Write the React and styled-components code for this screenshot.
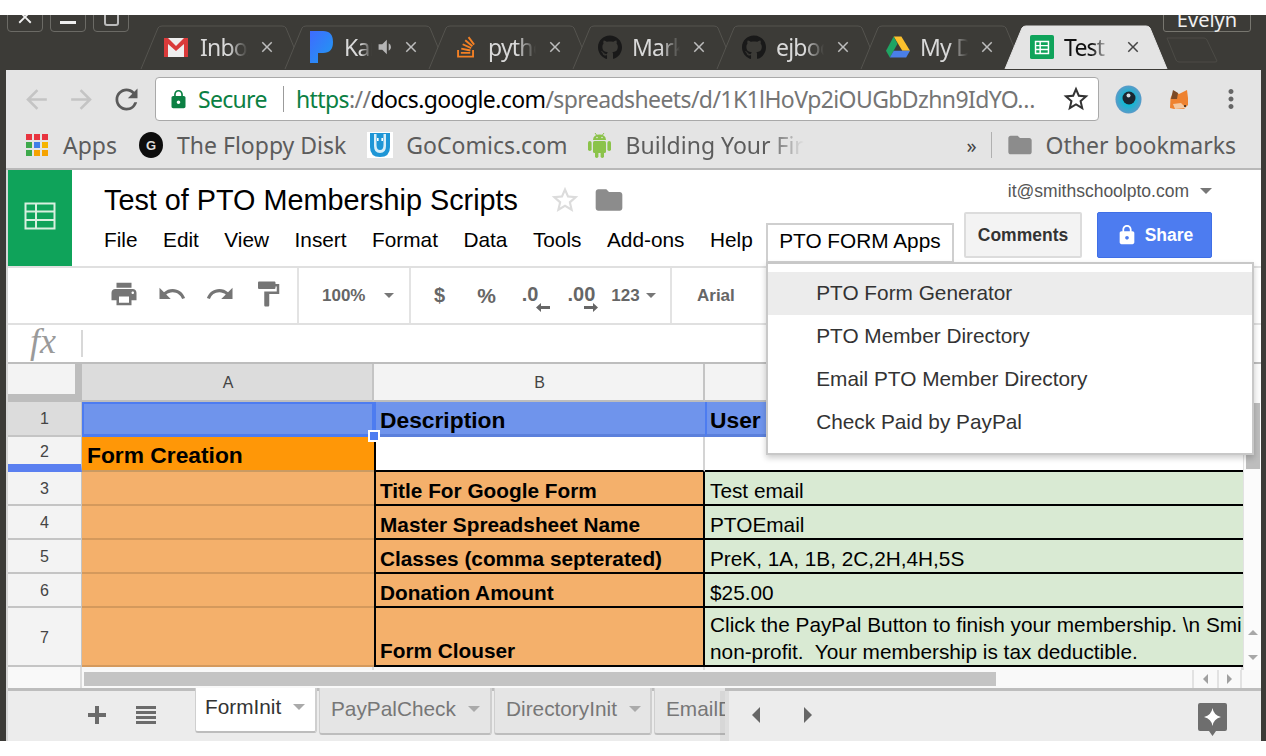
import styled, { createGlobalStyle } from 'styled-components';
import {
  MdArrowBack, MdArrowForward, MdClose, MdFolder, MdFormatPaint, MdLock, MdMoreVert,
  MdPrint, MdRedo, MdRefresh, MdStarBorder, MdUndo, MdVolumeDown,
} from 'react-icons/md';
import { FaGithub, FaStackOverflow } from 'react-icons/fa';

const uiFont = '"Noto Sans", "Open Sans", sans-serif';
const docFont = '"Liberation Sans", Arial, sans-serif';
const barColor = '#3c3b37';
const chromeGray = '#e4e4e4';
const orange = '#f4b06b';
const green = '#d9ead3';
const headBlue = '#6f94ec';
const selBlue = '#4d7cf0';

const GlobalStyle = createGlobalStyle`
  html, body {
    margin: 0;
    background: #fff;
    overflow: hidden;
  }
  * { box-sizing: border-box; }
`;

const Page = styled.div`
  width: 1266px;
  height: 756px;
  padding-top: 15px;
  background: #fff;
`;

const Window = styled.div`
  position: relative;
  height: 726px;
  padding: 0 5px 0 6px;
  background: ${barColor};
  display: flex;
  flex-direction: column;
  overflow: hidden;
`;

/* title strip */
const TitleStrip = styled.div`
  height: 55px;
  flex: none;
  display: flex;
  align-items: flex-start;
  padding-left: 1px;
`;

const WinButton = styled.div`
  width: 36px;
  height: 30px;
  margin: -13px 7px 0 0;
  border: 1px solid #6b6a65;
  border-radius: 4px;
  color: #f2f2f2;
  display: flex;
  align-items: flex-end;
  justify-content: center;
  padding-bottom: 6px;
`;

const MinBar = styled.div`
  width: 16px;
  height: 3px;
  margin-bottom: 1px;
  background: #eee;
`;

const RestoreBox = styled.div`
  width: 15px;
  height: 16px;
  border: 2px solid #bbb;
  border-radius: 3px;
  margin-bottom: -1px;
`;

const TabRow = styled.div`
  display: flex;
  margin: 10px 0 0 4px;
`;

const Tab = styled.div`
  position: relative;
  width: 164px;
  height: 44px;
  margin-right: -20px;
  padding-left: 26px;
  display: flex;
  align-items: center;
  z-index: ${(p) => (p.$active ? 2 : 1)};
  color: ${(p) => (p.$active ? '#111' : '#d9d9d9')};
`;

const TabOutline = styled.svg`
  position: absolute;
  inset: 0;
  width: 100%;
  height: 100%;
  z-index: -1;
`;

const Favicon = styled.div`
  width: 24px;
  height: 24px;
  flex: none;
  margin-left: ${(p) => p.$nudge || 0}px;
  margin-right: ${(p) => -(p.$nudge || 0)}px;
  display: flex;
  align-items: center;
  justify-content: center;
`;

const TabTitle = styled.div`
  width: ${(p) => p.$width}px;
  margin-left: 10px;
  flex: none;
  font: 23px ${uiFont};
  letter-spacing: -0.8px;
  white-space: nowrap;
  overflow: hidden;
  -webkit-mask-image: linear-gradient(to right, #000 60%, transparent 100%);
  mask-image: linear-gradient(to right, #000 60%, transparent 100%);
`;

const TabClose = styled(MdClose)`
  position: absolute;
  left: ${(p) => (p.$active ? 120 : 118)}px;
  top: 13px;
  color: ${(p) => (p.$active ? '#444' : '#bdbdbd')};
`;

const TabSpeaker = styled(MdVolumeDown)`
  margin-left: 2px;
  color: #b5b5b5;
  flex: none;
`;

const NewTabShape = styled.svg`
  margin: 12px 0 0 18px;
  flex: none;
`;

const ProfileClip = styled.div`
  position: absolute;
  left: 0;
  top: 0;
  width: 100%;
  height: 25px;
  overflow: hidden;
  pointer-events: none;
`;

const Profile = styled.div`
  position: absolute;
  left: 1163px;
  bottom: 8px;
  width: 88px;
  height: 27px;
  border: 1px solid #77766f;
  border-radius: 3px;
  color: #f0f0f0;
  font: 20px ${uiFont};
  text-align: center;
  line-height: 28px;
`;

/* url toolbar */
const UrlBar = styled.div`
  height: 55px;
  flex: none;
  display: flex;
  align-items: center;
  padding: 3px 0 0 8px;
  background: ${chromeGray};
`;

const NavButton = styled.div`
  width: 45px;
  display: flex;
  justify-content: center;
  color: ${(p) => (p.$off ? '#c4c4c4' : '#5a5a5a')};
`;

const Omnibox = styled.div`
  width: 944px;
  height: 44px;
  flex: none;
  margin-left: 6px;
  padding: 0 0 0 12px;
  display: flex;
  align-items: center;
  background: #fff;
  border: 1px solid #a9a9a9;
  border-radius: 4px;
  font: 23px ${uiFont};
  white-space: nowrap;
`;

const SecureLabel = styled.span`
  width: 69px;
  flex: none;
  margin-left: 9px;
  color: #0b8043;
  letter-spacing: -0.7px;
`;

const OmniDivider = styled.div`
  width: 1px;
  height: 26px;
  flex: none;
  margin: 0 12px 0 16px;
  background: #9b9b9b;
`;

const UrlText = styled.div`
  width: 742px;
  flex: none;
  overflow: hidden;
  letter-spacing: -0.6px;
  color: #757575;
`;

const UrlScheme = styled.span`
  color: #0b8043;
`;

const UrlHost = styled.span`
  color: #000;
`;

const OmniStar = styled(MdStarBorder)`
  margin-left: 23px;
  color: #333;
  flex: none;
`;

const ExtIcons = styled.div`
  display: flex;
  align-items: center;
  margin-left: 15px;
`;

const ExtSlot = styled.div`
  width: ${(p) => p.$w}px;
  flex: none;
  display: flex;
  justify-content: center;
  color: #666;
`;

/* bookmarks */
const BookmarkBar = styled.div`
  height: 45px;
  flex: none;
  display: flex;
  align-items: center;
  padding: 0 0 3px 20px;
  background: ${chromeGray};
  border-bottom: 2px solid #b8b8b8;
  font: 23px ${uiFont};
  color: #5c5c5c;
  white-space: nowrap;
`;

const Bookmark = styled.div`
  display: flex;
  align-items: center;
  gap: ${(p) => p.$gap || 14}px;
  margin-right: ${(p) => (p.$after === undefined ? 21 : p.$after)}px;
`;

const FadedBookmark = styled.div`
  width: 178px;
  overflow: hidden;
  -webkit-mask-image: linear-gradient(to right, #000 80%, transparent 100%);
  mask-image: linear-gradient(to right, #000 80%, transparent 100%);
`;

const Chevrons = styled.div`
  margin-left: auto;
  width: 11px;
  margin-right: -5px;
  color: #444;
  font-size: 20px;
`;

const BarDivider = styled.div`
  width: 1px;
  height: 26px;
  margin: 0 14px 0 18px;
  background: #b0b0b0;
`;

const AppsGrid = styled.div`
  display: grid;
  grid-template-columns: repeat(3, 6px);
  gap: 2px;
`;

const AppsDot = styled.div`
  width: 6px;
  height: 6px;
  background: ${(p) => p.$c};
`;

const FloppyBadge = styled.div`
  width: 24px;
  height: 26px;
  border-radius: 50%;
  background: #0d0d0d;
  color: #ddd;
  font: bold 13px ${docFont};
  display: flex;
  align-items: center;
  justify-content: center;
`;

/* sheets app */
const SheetsApp = styled.div`
  flex: 1;
  min-height: 0;
  background: #fff;
  border-left: 2px solid #d6d6d6;
  display: flex;
  flex-direction: column;
  font-family: ${docFont};
`;

const DocHead = styled.div`
  height: 98px;
  flex: none;
  display: flex;
  border-bottom: 2px solid #e0e0e0;
`;

const SheetsLogo = styled.div`
  width: 64px;
  flex: none;
  padding-bottom: 4px;
  background: #0fa35a;
  display: flex;
  align-items: center;
  justify-content: center;
`;

const HeadMain = styled.div`
  flex: 1;
  padding-left: 32px;
`;

const TitleRow = styled.div`
  height: 53px;
  padding-top: 7px;
  display: flex;
  align-items: center;
`;

const DocTitle = styled.div`
  font-size: 28.8px;
  color: #000;
  white-space: nowrap;
`;

const TitleStar = styled(MdStarBorder)`
  margin-left: 31px;
  color: #dcdcdc;
  flex: none;
`;

const TitleFolder = styled(MdFolder)`
  margin-left: 12px;
  color: #8c8c8c;
  flex: none;
`;

const MenuRow = styled.div`
  height: 40px;
  display: flex;
  align-items: flex-start;
  gap: 25.5px;
  font-size: 20.8px;
  line-height: 34px;
  color: #000;
  white-space: nowrap;
`;

const AddonMenu = styled.div`
  position: relative;
  width: 188px;
  height: 40px;
  flex: none;
  margin-left: -12px;
  padding: 0 0 4px 11px;
  display: flex;
  align-items: center;
  background: #fff;
  border: 2px solid #cfcfcf;
  z-index: 5;
`;

const Dropdown = styled.div`
  position: absolute;
  left: -2px;
  top: 37px;
  width: 488px;
  height: 193px;
  padding-top: 8px;
  background: #fff;
  border: 2px solid #c8c8c8;
  box-shadow: 0 3px 6px rgba(0, 0, 0, 0.2);
  color: #333;
`;

const DropItem = styled.div`
  height: 43px;
  padding: 0 0 2px 48px;
  display: flex;
  align-items: center;
  background: ${(p) => (p.$hover ? '#ececec' : 'transparent')};
`;

const HeadRight = styled.div`
  width: 298px;
  flex: none;
  padding-right: 49px;
  display: flex;
  flex-direction: column;
  align-items: flex-end;
`;

const AccountLine = styled.div`
  height: 42px;
  display: flex;
  align-items: center;
  gap: 11px;
  font-size: 17.5px;
  color: #555;
`;

const Caret = styled.div`
  width: 0;
  height: 0;
  flex: none;
  margin-left: ${(p) => p.$left || 0}px;
  border-left: ${(p) => p.$size || 6}px solid transparent;
  border-right: ${(p) => p.$size || 6}px solid transparent;
  border-top: ${(p) => p.$size || 6}px solid ${(p) => p.$color || '#777'};
`;

const HeadButtons = styled.div`
  display: flex;
  gap: 15px;
`;

const CommentsButton = styled.div`
  width: 118px;
  height: 46px;
  border: 2px solid #dcdcdc;
  border-radius: 2px;
  background: #f3f3f3;
  color: #333;
  font-size: 17.5px;
  font-weight: bold;
  display: flex;
  align-items: center;
  justify-content: center;
`;

const ShareButton = styled.div`
  width: 115px;
  height: 46px;
  border: 1px solid #3f6fe6;
  border-radius: 2px;
  background: ${selBlue};
  color: #fff;
  font-size: 17.5px;
  font-weight: bold;
  display: flex;
  align-items: center;
  justify-content: center;
  gap: 7px;
`;

const SheetToolbar = styled.div`
  height: 57px;
  flex: none;
  display: flex;
  align-items: stretch;
  border-bottom: 2px solid #e0e0e0;
  color: #757575;
`;

const ToolGroup = styled.div`
  width: ${(p) => p.$w}px;
  flex: none;
  display: flex;
  align-items: center;
  padding-left: ${(p) => p.$pad || 0}px;
  border-right: ${(p) => (p.$plain ? 'none' : '2px solid #e3e3e3')};
`;

const ToolIcon = styled.div`
  width: 48px;
  flex: none;
  margin-bottom: 4px;
  display: flex;
  justify-content: center;
`;

const ToolText = styled.div`
  font-size: ${(p) => p.$size || 17}px;
  font-weight: bold;
  color: ${(p) => p.$color || '#666'};
  margin-left: ${(p) => p.$left || 0}px;
  white-space: nowrap;
`;

const DecimalButton = styled.div`
  margin-left: ${(p) => p.$left}px;
  padding-top: 8px;
  display: flex;
  flex-direction: column;
  font-size: 20px;
  font-weight: bold;
  line-height: 19px;
  color: #666;
`;

const DecimalArrow = styled.svg`
  align-self: flex-end;
  margin: -1px ${(p) => -p.$over}px 3px 0;
  fill: currentColor;
`;

const FormulaBar = styled.div`
  height: 39px;
  flex: none;
  display: flex;
  align-items: center;
  padding-left: 22px;
  border-bottom: 2px solid #bdbdbd;
`;

const FxLabel = styled.div`
  width: 51px;
  margin-top: -5px;
  font: italic 36px "Liberation Serif", serif;
  color: #9a9a9a;
`;

const FormulaDivider = styled.div`
  width: 2px;
  height: 27px;
  background: #d8d8d8;
`;

const GridWrap = styled.div`
  height: 306px;
  flex: none;
  display: flex;
`;

const Grid = styled.div`
  width: 1235px;
  flex: none;
  display: grid;
  grid-template-columns: 74px 292px 331px 538px;
  grid-template-rows: 38px 35px 35px 34px 34px 34px 34px 59px 3px;
  color: #000;
`;

const Corner = styled.div`
  background: #f3f3f3;
  border-right: 7px solid #bdbdbd;
  border-bottom: 8px solid #bdbdbd;
`;

const ColHead = styled.div`
  display: flex;
  align-items: center;
  justify-content: center;
  padding: 2px 0 0 2px;
  font-size: 16px;
  color: #444;
  background: ${(p) => (p.$selected ? '#dcdcdc' : '#f3f3f3')};
  border-right: 2px solid #c4c4c4;
  border-bottom: 2px solid #bdbdbd;
`;

const RowHead = styled.div`
  display: flex;
  align-items: center;
  justify-content: center;
  padding-top: ${(p) => (p.$selected ? 0 : 2)}px;
  font-size: 16px;
  color: #444;
  background: ${(p) => (p.$selected ? '#dcdcdc' : '#f3f3f3')};
  border-bottom: ${(p) => (p.$marked ? `8px solid #5a7ff0` : '2px solid #c4c4c4')};
  border-right: 1px solid #c4c4c4;
`;

const SelectedCell = styled.div`
  position: relative;
  background: ${headBlue};
  border: 2px solid ${selBlue};
  border-bottom-width: 3px;
`;

const FillHandle = styled.div`
  position: absolute;
  right: -8px;
  bottom: -8px;
  width: 12px;
  height: 12px;
  background: ${selBlue};
  border: 2px solid #fff;
  z-index: 2;
`;

const BandCell = styled.div`
  display: flex;
  align-items: center;
  padding: 5px 0 0 ${(p) => (p.$tight ? 3 : 4)}px;
  background: ${headBlue};
  font-size: 22.8px;
  font-weight: bold;
  overflow: hidden;
  white-space: nowrap;
  border-left: 2px solid ${selBlue};
  border-bottom: 3px solid #5b80dc;
`;

const SectionCell = styled.div`
  display: flex;
  align-items: center;
  padding: 4px 0 0 5px;
  background: #ff9707;
  font-size: 22.8px;
  font-weight: bold;
  white-space: nowrap;
  border-bottom: 2px solid #c99a62;
`;

const BlankCell = styled.div`
  background: #fff;
  border-left: ${(p) => (p.$black ? '2px solid #000' : 'none')};
  border-right: ${(p) => (p.$line ? '2px solid #d4d4d4' : 'none')};
  border-bottom: 2px solid #000;
`;

const SideCell = styled.div`
  background: ${orange};
  border-bottom: 2px solid #d4995c;
`;

const LabelCell = styled.div`
  display: flex;
  align-items: ${(p) => (p.$end ? 'flex-end' : 'center')};
  padding: ${(p) => (p.$end ? '0 0 2px 4px' : '6px 0 0 4px')};
  background: ${orange};
  font-size: 20.8px;
  font-weight: bold;
  white-space: nowrap;
  border-left: 2px solid #000;
  border-right: 2px solid #000;
  border-bottom: 2px solid #000;
`;

const ValueCell = styled.div`
  padding: ${(p) => (p.$tall ? 2 : 5)}px 0 0 5px;
  display: flex;
  flex-direction: column;
  justify-content: center;
  background: ${green};
  font-size: 20.8px;
  line-height: 27px;
  white-space: pre;
  overflow: hidden;
  border-bottom: 2px solid #000;
`;

const SliverCell = styled.div`
  background: #f7f7f7;
  border-right: 2px solid #dcdcdc;
`;

const VScroll = styled.div`
  flex: 1;
  padding-top: 39px;
  background: #fbfbfb;
  border-left: 1px solid #e2e2e2;
  display: flex;
  flex-direction: column;
  align-items: center;
`;

const VThumb = styled.div`
  width: 14px;
  height: 66px;
  background: #bdbdbd;
`;

const VArrows = styled.div`
  margin: auto 0 10px;
  display: flex;
  flex-direction: column;
  align-items: center;
  gap: 20px;
`;

const Triangle = styled.div`
  width: 0;
  height: 0;
  flex: none;
  border-style: solid;
  border-color: transparent;
  border-width: ${(p) => p.$size}px;
  ${(p) => {
    const back = { left: 'right', right: 'left', up: 'bottom', down: 'top' }[p.$point];
    const front = { left: 'left', right: 'right', up: 'top', down: 'bottom' }[p.$point];
    return `border-${back}-color: ${p.$color}; border-${front}-width: 0;`;
  }}
`;

const HScroll = styled.div`
  height: 18px;
  flex: none;
  display: flex;
  background: #f9f9f9;
`;

const HScrollCorner = styled.div`
  width: 74px;
  flex: none;
  border-right: 2px solid #dcdcdc;
`;

const HTrack = styled.div`
  width: 1110px;
  flex: none;
  padding: 2px 0 2px 2px;
`;

const HThumb = styled.div`
  width: 912px;
  height: 100%;
  background: #c4c4c4;
`;

const HArrow = styled.div`
  width: 25px;
  flex: none;
  display: flex;
  align-items: center;
  justify-content: center;
  border-left: 2px solid #e2e2e2;
  &:last-child {
    border-right: 2px solid #e2e2e2;
  }
`;

const TabsBar = styled.div`
  height: 53px;
  flex: none;
  display: flex;
  align-items: flex-start;
  padding-left: 64px;
  background: #ececec;
  border-top: 3px solid #bdbdbd;
`;

const BarIcon = styled.div`
  width: 49px;
  height: 42px;
  flex: none;
  display: flex;
  align-items: center;
  justify-content: center;
  margin-top: 3px;
  color: #6b6b6b;
`;

const SheetTabs = styled.div`
  width: 530px;
  height: 50px;
  margin: -3px 0 0 25px;
  flex: none;
  display: flex;
  gap: 2px;
  overflow: hidden;
`;

const TabShade = styled.div`
  width: 9px;
  height: 50px;
  margin-left: -5px;
  flex: none;
  background: rgba(0, 0, 0, 0.06);
`;

const SheetTab = styled.div`
  width: ${(p) => p.$w}px;
  height: ${(p) => (p.$active ? 45 : 47)}px;
  flex: none;
  padding: ${(p) => (p.$active ? '0 0 5px 9px' : '0 0 3px 11px')};
  display: flex;
  align-items: center;
  gap: 12px;
  background: ${(p) => (p.$active ? '#fff' : '#e5e5e5')};
  border-bottom: 2px solid #bdbdbd;
  border-right: 2px solid #cfcfcf;
  border-left: 1px solid #cfcfcf;
  border-radius: 0 0 3px 3px;
  font-size: 20.8px;
  color: ${(p) => (p.$active ? '#333' : '#777')};
  white-space: nowrap;
  overflow: hidden;
`;

const TabNav = styled.div`
  width: 60px;
  margin: 16px 0 0 23px;
  flex: none;
  display: flex;
  justify-content: space-between;
`;

const ExploreIcon = styled.svg`
  margin: 12px 0 0 386px;
  flex: none;
`;

const TabFrame = ({ active }) => (
  <TabOutline viewBox="0 0 164 44" preserveAspectRatio="none">
    <path
      d="M1 44 L18 3 Q19 1 22 1 H142 Q145 1 146 3 L163 44"
      fill={active ? chromeGray : barColor}
      stroke={active ? chromeGray : '#55544f'}
      strokeWidth="1"
    />
  </TabOutline>
);

const GmailIcon = () => (
  <svg width="24" height="22" viewBox="0 0 24 22">
    <rect x="0" y="2" width="24" height="19" fill="#eee" />
    <path d="M0 2 H4 L12 10 L20 2 H24 V21 H20 V8 L12 15 L4 8 V21 H0 Z" fill="#d93a3a" />
  </svg>
);

const PandoraIcon = () => (
  <svg width="24" height="32" viewBox="0 0 24 32">
    <defs>
      <linearGradient id="pandoraFill" x1="0" y1="0" x2="1" y2="1">
        <stop offset="0" stopColor="#3f6bff" />
        <stop offset="1" stopColor="#1f9bf0" />
      </linearGradient>
    </defs>
    <path d="M0 0 H13 Q23 0 23 11 Q23 22 13 22 H8 V32 H0 Z" fill="url(#pandoraFill)" />
  </svg>
);

const DriveIcon = () => (
  <svg width="25" height="22" viewBox="0 0 25 22">
    <path d="M8 0 H16 L25 15 H17 Z" fill="#fbc02d" />
    <path d="M8 0 L12 7.5 L4 22 L0 15 Z" fill="#1fa463" />
    <path d="M8 15 H25 L21 22 H4 Z" fill="#4a7fe8" />
  </svg>
);

const SheetsFavicon = () => (
  <svg width="26" height="26" viewBox="0 0 26 26">
    <rect width="26" height="26" rx="2" fill="#0fa35a" />
    <path d="M6 7 H20 V20 H6 Z M6 11.5 H20 M6 15.7 H20 M11 7 V20" fill="none" stroke="#fff" strokeWidth="1.6" />
  </svg>
);

const GridLogo = () => (
  <svg width="32" height="32" viewBox="0 0 32 32">
    <path d="M1.5 3.5 H30.5 V28.5 H1.5 Z M1.5 11.5 H30.5 M1.5 20 H30.5 M12 3.5 V28.5" fill="none" stroke="#d7f0df" strokeWidth="2" />
  </svg>
);

const EyeIcon = () => (
  <svg width="27" height="29" viewBox="0 0 27 29">
    <defs>
      <radialGradient id="irisFill">
        <stop offset="0.45" stopColor="#14b6d2" />
        <stop offset="1" stopColor="#5a9ac8" />
      </radialGradient>
    </defs>
    <ellipse cx="13.5" cy="14.5" rx="13" ry="14" fill="url(#irisFill)" />
    <circle cx="14" cy="13" r="6.5" fill="#1a2630" />
    <circle cx="13.5" cy="10.5" r="2" fill="#d5dde2" />
  </svg>
);

const FoxIcon = () => (
  <svg width="20" height="22" viewBox="0 0 20 22">
    <path d="M1 20 L1.5 10 L5 3 L10 6 L18 2 L19 10 L19 17 L15 21 L5 21 Z" fill="#ee8230" />
    <path d="M2 11 L4 2 L9 5 L8 11 Z" fill="#7b4a26" />
    <path d="M4 16 L12 15 L17 20 L6 21 Z" fill="#f4c9a2" />
    <circle cx="16" cy="18" r="1" fill="#222" />
  </svg>
);

const GoComicsIcon = () => (
  <svg width="26" height="26" viewBox="0 0 26 26">
    <rect width="26" height="26" fill="#fff" />
    <path d="M3 1 H23 V15 Q23 25 13 25 Q3 25 3 15 Z" fill="#1e96d6" />
    <path d="M7 2 V14 Q7 21 13 21 Q19 21 19 14 V2 Z" fill="#d7eef9" />
    <path d="M9.5 2 V13 Q9.5 18 13 18 Q16.5 18 16.5 13 V2 Z" fill="#1e96d6" />
    <rect x="10" y="6" width="1.6" height="3" fill="#fff" />
    <rect x="14.4" y="6" width="1.6" height="3" fill="#fff" />
  </svg>
);

const AndroidIcon = () => (
  <svg width="25" height="26" viewBox="0 0 25 26" fill="#8bc34a">
    <path d="M6 8 Q6.3 2.5 12.5 2.5 Q18.7 2.5 19 8 Z" />
    <path d="M8 1 L9.8 3.4 M17 1 L15.2 3.4" stroke="#8bc34a" strokeWidth="1" />
    <rect x="6" y="9" width="13" height="12" rx="1.5" />
    <rect x="1" y="9" width="3.6" height="10" rx="1.8" />
    <rect x="20.4" y="9" width="3.6" height="10" rx="1.8" />
    <rect x="8" y="19" width="3.4" height="7" rx="1.7" />
    <rect x="13.6" y="19" width="3.4" height="7" rx="1.7" />
    <circle cx="10" cy="5.5" r="0.8" fill="#e4e4e4" />
    <circle cx="15" cy="5.5" r="0.8" fill="#e4e4e4" />
  </svg>
);

const PlusIcon = () => (
  <svg width="18" height="18" viewBox="0 0 18 18" fill="currentColor">
    <rect x="7" y="0" width="4" height="18" />
    <rect x="0" y="7" width="18" height="4" />
  </svg>
);

const ListIcon = () => (
  <svg width="20" height="18" viewBox="0 0 20 18" fill="currentColor">
    <rect y="0" width="20" height="3" />
    <rect y="5" width="20" height="3" />
    <rect y="10" width="20" height="3" />
    <rect y="15" width="20" height="3" />
  </svg>
);

const ExploreGlyph = () => (
  <ExploreIcon width="29" height="33" viewBox="0 0 29 33">
    <path d="M2 0 H27 Q29 0 29 2 V26 Q29 28 27 28 H18 L14.5 33 L11 28 H2 Q0 28 0 26 V2 Q0 0 2 0 Z" fill="#6e6e6e" />
    <path d="M14.5 5 Q15.5 12 23 14 Q15.5 16 14.5 23 Q13.5 16 6 14 Q13.5 12 14.5 5 Z" fill="#fff" />
  </ExploreIcon>
);

const appsColors = ['#e8343f', '#e8343f', '#e8343f', '#3da94b', '#3f7fe8', '#f5b400', '#3da94b', '#f5a300', '#f5a300'];

const browserTabs = [
  { title: 'Inbox (3)', width: 48, nudge: -2, icon: <GmailIcon /> },
  { title: 'Kara', width: 28, icon: <PandoraIcon />, speaker: true },
  { title: 'python', width: 48, icon: <FaStackOverflow size={24} color="#f48024" /> },
  { title: 'Markdown', width: 48, icon: <FaGithub size={27} color="#191919" /> },
  { title: 'ejbooth', width: 48, icon: <FaGithub size={27} color="#191919" /> },
  { title: 'My Drive', width: 48, icon: <DriveIcon /> },
];

const dataRows = [
  { n: 3, label: 'Title For Google Form', value: 'Test email' },
  { n: 4, label: 'Master Spreadsheet Name', value: 'PTOEmail' },
  { n: 5, label: 'Classes (comma septerated)', value: 'PreK, 1A, 1B, 2C,2H,4H,5S' },
  { n: 6, label: 'Donation Amount', value: '$25.00' },
];

const menuItems = ['File', 'Edit', 'View', 'Insert', 'Format', 'Data', 'Tools', 'Add-ons', 'Help'];
const dropItems = ['PTO Form Generator', 'PTO Member Directory', 'Email PTO Member Directory', 'Check Paid by PayPal'];

const App = () => {
  return (
    <Page>
      <GlobalStyle />
      <Window>
        <TitleStrip>
          <WinButton><MdClose size={22} style={{ marginBottom: -3 }} /></WinButton>
          <WinButton><MinBar /></WinButton>
          <WinButton><RestoreBox /></WinButton>
          <TabRow>
            {browserTabs.map((t) => (
              <Tab key={t.title}>
                <TabFrame />
                <Favicon $nudge={t.nudge}>{t.icon}</Favicon>
                <TabTitle $width={t.width}>{t.title}</TabTitle>
                {t.speaker && <TabSpeaker size={22} />}
                <TabClose size={18} />
              </Tab>
            ))}
            <Tab $active>
              <TabFrame active />
              <Favicon><SheetsFavicon /></Favicon>
              <TabTitle $width={46}>Test of PTO</TabTitle>
              <TabClose size={18} $active />
            </Tab>
            <NewTabShape width="52" height="26" viewBox="0 0 52 26">
              <path d="M1 1 H38 Q40 1 41 3 L51 24 Q51 25 49 25 H13 Q11 25 10 23 Z" fill="none" stroke="#4c4b46" />
            </NewTabShape>
          </TabRow>
        </TitleStrip>
        <ProfileClip>
          <Profile>Evelyn</Profile>
        </ProfileClip>

        <UrlBar>
          <NavButton $off><MdArrowBack size={31} /></NavButton>
          <NavButton $off><MdArrowForward size={31} /></NavButton>
          <NavButton><MdRefresh size={33} /></NavButton>
          <Omnibox>
            <MdLock size={21} color="#0b8043" style={{ flex: 'none' }} />
            <SecureLabel>Secure</SecureLabel>
            <OmniDivider />
            <UrlText>
              <UrlScheme>https</UrlScheme>://<UrlHost>docs.google.com</UrlHost>/spreadsheets/d/1K1lHoVp2iOUGbDzhn9IdYO…
            </UrlText>
            <OmniStar size={30} />
          </Omnibox>
          <ExtIcons>
            <ExtSlot $w={28}><EyeIcon /></ExtSlot>
            <ExtSlot $w={74}><FoxIcon /></ExtSlot>
            <ExtSlot $w={30}><MdMoreVert size={32} /></ExtSlot>
          </ExtIcons>
        </UrlBar>

        <BookmarkBar>
          <Bookmark $gap={15} $after={22}>
            <AppsGrid>
              {appsColors.map((c, i) => <AppsDot key={i} $c={c} />)}
            </AppsGrid>
            Apps
          </Bookmark>
          <Bookmark>
            <FloppyBadge>G</FloppyBadge>
            The Floppy Disk
          </Bookmark>
          <Bookmark $gap={13} $after={19}>
            <GoComicsIcon />
            GoComics.com
          </Bookmark>
          <Bookmark $after={0}>
            <AndroidIcon />
            <FadedBookmark>Building Your First App</FadedBookmark>
          </Bookmark>
          <Chevrons>»</Chevrons>
          <BarDivider />
          <Bookmark $gap={12} $after={25}>
            <MdFolder size={28} color="#8c8c8c" />
            Other bookmarks
          </Bookmark>
        </BookmarkBar>

        <SheetsApp>
          <DocHead>
            <SheetsLogo><GridLogo /></SheetsLogo>
            <HeadMain>
              <TitleRow>
                <DocTitle>Test of PTO Membership Scripts</DocTitle>
                <TitleStar size={32} />
                <TitleFolder size={32} />
              </TitleRow>
              <MenuRow>
                {menuItems.map((m) => <span key={m}>{m}</span>)}
                <AddonMenu>
                  PTO FORM Apps
                  <Dropdown>
                    {dropItems.map((d, i) => <DropItem key={d} $hover={i === 0}>{d}</DropItem>)}
                  </Dropdown>
                </AddonMenu>
              </MenuRow>
            </HeadMain>
            <HeadRight>
              <AccountLine>
                it@smithschoolpto.com
                <Caret />
              </AccountLine>
              <HeadButtons>
                <CommentsButton>Comments</CommentsButton>
                <ShareButton><MdLock size={22} />Share</ShareButton>
              </HeadButtons>
            </HeadRight>
          </DocHead>

          <SheetToolbar>
            <ToolGroup $w={291} $pad={92}>
              <ToolIcon><MdPrint size={30} /></ToolIcon>
              <ToolIcon><MdUndo size={30} /></ToolIcon>
              <ToolIcon><MdRedo size={30} /></ToolIcon>
              <ToolIcon><MdFormatPaint size={30} /></ToolIcon>
            </ToolGroup>
            <ToolGroup $w={112} $pad={23}>
              <ToolText>100%</ToolText>
              <Caret $size={5} $left={19} />
            </ToolGroup>
            <ToolGroup $w={261}>
              <ToolText $size={20} $left={23}>$</ToolText>
              <ToolText $size={21} $left={32}>%</ToolText>
              <DecimalButton $left={26}>
                .0
                <DecimalArrow $over={11} width="14" height="9" viewBox="0 0 14 9">
                  <path d="M0 4.5 L5 0 V3 H14 V6 H5 V9 Z" />
                </DecimalArrow>
              </DecimalButton>
              <DecimalButton $left={29}>
                .00
                <DecimalArrow $over={3} width="14" height="9" viewBox="0 0 14 9">
                  <path d="M14 4.5 L9 0 V3 H0 V6 H9 V9 Z" />
                </DecimalArrow>
              </DecimalButton>
              <ToolText $left={16}>123</ToolText>
              <Caret $size={5} $left={6} />
            </ToolGroup>
            <ToolGroup $plain $w={200} $pad={25}>
              <ToolText>Arial</ToolText>
            </ToolGroup>
          </SheetToolbar>

          <FormulaBar>
            <FxLabel>fx</FxLabel>
            <FormulaDivider />
          </FormulaBar>

          <GridWrap>
            <Grid>
              <Corner />
              <ColHead $selected>A</ColHead>
              <ColHead>B</ColHead>
              <ColHead>C</ColHead>

              <RowHead $selected>1</RowHead>
              <SelectedCell><FillHandle /></SelectedCell>
              <BandCell>Description</BandCell>
              <BandCell $tight>User</BandCell>

              <RowHead $marked>2</RowHead>
              <SectionCell>Form Creation</SectionCell>
              <BlankCell $black $line />
              <BlankCell />

              {dataRows.map((r) => [
                <RowHead key={`h${r.n}`}>{r.n}</RowHead>,
                <SideCell key={`s${r.n}`} />,
                <LabelCell key={`l${r.n}`}>{r.label}</LabelCell>,
                <ValueCell key={`v${r.n}`}>{r.value}</ValueCell>,
              ])}

              <RowHead>7</RowHead>
              <SideCell />
              <LabelCell $end>Form Clouser</LabelCell>
              <ValueCell $tall>
                <div>Click the PayPal Button to finish your membership. \n Smi</div>
                <div>non-profit.  Your membership is tax deductible.</div>
              </ValueCell>

              <SliverCell />
              <SliverCell />
              <SliverCell />
              <SliverCell />
            </Grid>
            <VScroll>
              <VThumb />
              <VArrows>
                <Triangle $point="up" $size={5} $color="#a8a8a8" />
                <Triangle $point="down" $size={5} $color="#a8a8a8" />
              </VArrows>
            </VScroll>
          </GridWrap>

          <HScroll>
            <HScrollCorner />
            <HTrack><HThumb /></HTrack>
            <HArrow><Triangle $point="left" $size={5} $color="#a0a0a0" /></HArrow>
            <HArrow><Triangle $point="right" $size={5} $color="#a0a0a0" /></HArrow>
          </HScroll>

          <TabsBar>
            <BarIcon><PlusIcon /></BarIcon>
            <BarIcon><ListIcon /></BarIcon>
            <SheetTabs>
              <SheetTab $active $w={122}>FormInit<Caret $size={6} $color="#aaa" /></SheetTab>
              <SheetTab $w={173}>PayPalCheck<Caret $size={6} $color="#aaa" /></SheetTab>
              <SheetTab $w={158}>DirectoryInit<Caret $size={6} $color="#aaa" /></SheetTab>
              <SheetTab $w={90}>EmailDirectory</SheetTab>
            </SheetTabs>
            <TabShade />
            <TabNav>
              <Triangle $point="left" $size={8} $color="#666" />
              <Triangle $point="right" $size={8} $color="#666" />
            </TabNav>
            <ExploreGlyph />
          </TabsBar>
        </SheetsApp>
      </Window>
    </Page>
  );
};

export default App;
